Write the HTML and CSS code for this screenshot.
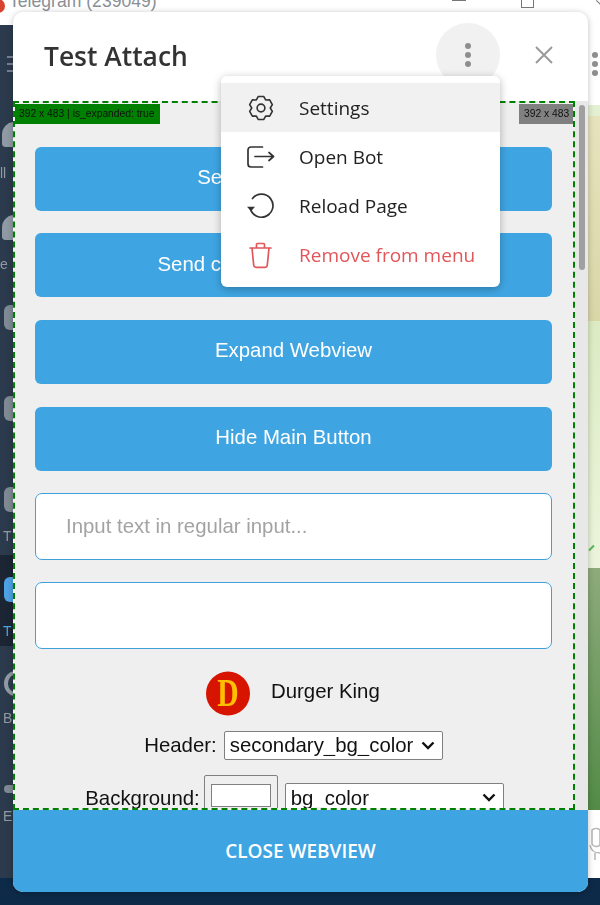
FILE: index.html
```html
<!DOCTYPE html>
<html lang="en">
<head>
<meta charset="utf-8">
<title>Test Attach</title>
<link rel="stylesheet" href="styles.css">
</head>
<body>
<div class="desktop">
  <div class="titlebar">
    <span class="app-dot"></span>
    <span class="app-title">Telegram (239049)</span>
    <span class="win-min"></span>
    <span class="win-max"></span>
    <span class="win-close"></span>
  </div>
  <div class="app">
    <div class="sidebar">
      <div class="burger"><i></i><i></i><i></i></div>
      <div class="tab tab-a"><span class="bubble"></span><span class="tab-label">ll</span></div>
      <div class="tab tab-b"><span class="bubble"></span><span class="tab-label">e</span></div>
      <div class="tab tab-c"><span class="tile"></span></div>
      <div class="tab tab-d"><span class="tile"></span></div>
      <div class="tab tab-e"><span class="tile"></span><span class="tab-label">T</span></div>
      <div class="tab tab-active"><span class="tile blue"></span><span class="tab-label blue-text">T</span></div>
      <div class="tab tab-f"><span class="tile ring"></span><span class="tab-label">B</span></div>
      <div class="tab tab-g"><span class="tile"></span><span class="tab-label">E</span></div>
    </div>
    <div class="chat">
      <div class="chat-head"><i></i><i></i><i></i></div>
      <div class="wall">
        <div class="wall-a"></div>
        <div class="wall-b"></div>
        <div class="wall-c"><span class="tick"></span></div>
        <div class="wall-d"></div>
      </div>
      <div class="chat-foot">
        <svg width="12" height="36" viewBox="0 0 12 36" fill="none" stroke="#b5b5b5" stroke-width="1.500"><path d="M4 3a6 6 0 0 1 8 0v15a5 5 0 0 1-8-1zM2 18c1 6 5 8 10 8M7 26v7"/></svg>
      </div>
    </div>
  </div>
</div>

<div class="modal">
  <header class="modal-head">
    <h1 class="modal-title">Test Attach</h1>
    <button class="more" type="button" aria-label="More"><i></i><i></i><i></i></button>
    <button class="close" type="button" aria-label="Close">
      <svg width="20" height="20" viewBox="0 0 20 20"><path d="M2 2 18 18M18 2 2 18" stroke="#9a9a9a" stroke-width="2" fill="none"/></svg>
    </button>
  </header>

  <div class="viewport">
    <div class="webview">
      <div class="stats">
        <span class="stat-full">392 x 483 | is_expanded: true</span>
        <span class="stat-short">392 x 483</span>
      </div>
      <div class="content">
        <button class="btn" type="button">Send message to bot</button>
        <button class="btn" type="button">Send current messages to bot</button>
        <button class="btn" type="button">Expand Webview</button>
        <button class="btn" type="button">Hide Main Button</button>
        <input class="field" type="text" placeholder="Input text in regular input...">
        <input class="field field-b" type="text">
        <div class="user">
          <svg class="avatar" width="44" height="45" viewBox="0 0 44 45"><circle cx="22" cy="22.500" r="22" fill="#d71400"/></svg>
          <span class="avatar-letter">D</span>
          <span class="user-name">Durger King</span>
        </div>
        <div class="row row-header">
          <label class="row-label">Header:</label>
          <select class="sel sel-header"><option>secondary_bg_color</option></select>
        </div>
        <div class="row row-bg">
          <label class="row-label">Background:</label>
          <span class="color"><span class="swatch"></span></span>
          <select class="sel sel-bg"><option>bg_color</option></select>
        </div>
      </div>
    </div>
    <div class="scrollbar"><div class="thumb"></div></div>
  </div>

  <button class="main-btn" type="button">CLOSE WEBVIEW</button>

  <nav class="menu">
    <div class="menu-item active">
      <svg class="mi" width="28" height="28" viewBox="-1 -1 26 26" fill="none" stroke="#333" stroke-width="1.500" stroke-linejoin="round"><path d="M14.470 1.280 16.300 4.550 20.040 4.500 22.520 8.790 20.600 12 22.520 15.210 20.040 19.500 16.300 19.450 14.470 22.720H9.530L7.700 19.450 3.960 19.500 1.480 15.210 3.400 12 1.480 8.790 3.960 4.500 7.700 4.550 9.530 1.280z"/><circle cx="12" cy="12" r="3.600"/></svg>
      <span>Settings</span>
    </div>
    <div class="menu-item">
      <svg class="mi" width="28" height="28" viewBox="0 0 28 28" fill="none" stroke="#333" stroke-width="1.700" stroke-linecap="round" stroke-linejoin="round"><path d="M15.500 4H4a3 3 0 0 0-3 3v14a3 3 0 0 0 3 3h11.500"/><path d="M8 13.500h18M22 9.500l4.500 4-4.500 4"/></svg>
      <span>Open Bot</span>
    </div>
    <div class="menu-item">
      <svg class="mi" width="28" height="28" viewBox="0 0 28 28" fill="none" stroke="#333" stroke-width="1.700" stroke-linecap="round"><path d="M5.500 6.500A11.500 11.500 0 1 1 3.200 16"/><path d="M0 14.800h8l-4 4.400z" fill="#333" stroke="none"/></svg>
      <span>Reload Page</span>
    </div>
    <div class="menu-item danger">
      <svg class="mi" width="28" height="28" viewBox="0 0 28 28" fill="none" stroke="#e2565a" stroke-width="1.700" stroke-linecap="round" stroke-linejoin="round"><path d="M3 7h21M9.500 7V3.500a1 1 0 0 1 1-1h6a1 1 0 0 1 1 1V7M5 7l1.700 17a2.500 2.500 0 0 0 2.500 2.300h8.600a2.500 2.500 0 0 0 2.500-2.300L22 7"/></svg>
      <span>Remove from menu</span>
    </div>
  </nav>
</div>
</body>
</html>
```
FILE: styles.css
```css
* { box-sizing: border-box; }
html, body { margin: 0; padding: 0; }
body {
  width: 600px;
  height: 905px;
  overflow: hidden;
  position: relative;
  background: #0d2a48;
  font-family: "Liberation Sans", Arial, sans-serif;
}

/* Desktop behind the popup */
.desktop { width: 600px; height: 878px; display: flex; flex-direction: column; filter: blur(.35px); }
.titlebar {
  height: 25px;
  background: #fff;
  display: flex;
  align-items: center;
  position: relative;
  overflow: hidden;
  flex: none;
}
.app-dot { width: 14px; height: 14px; border-radius: 50%; background: #d8432f; margin-left: -9px; margin-top: -14px; }
.app-title { margin-left: 4px; margin-top: -22px; font: 17.600px "Liberation Sans", sans-serif; color: #8a8f96; }
.win-min { position: absolute; left: 452px; top: 0; width: 14px; height: 1px; background: #777; }
.win-max { position: absolute; left: 521px; top: -5px; width: 13px; height: 13px; border: 1px solid #777; }
.win-close { position: absolute; left: 595px; top: 3px; width: 9px; height: 1px; background: #777; transform: rotate(45deg); }
.app { flex: 1; display: flex; justify-content: space-between; min-height: 0; }
.sidebar { width: 13px; background: #2b3a4c; position: relative; overflow: hidden; }
.burger { position: absolute; left: 7px; top: 31px; display: flex; flex-direction: column; gap: 5px; }
.burger i { display: block; width: 12px; height: 2px; background: #77828e; }
.tab { position: absolute; left: 0; width: 13px; overflow: hidden; }
.tab-a { top: 97px; height: 60px; }
.tab-b { top: 190px; height: 58px; }
.tab-c { top: 278px; height: 30px; }
.tab-d { top: 369px; height: 30px; }
.tab-e { top: 460px; height: 60px; }
.tab-active { top: 530px; height: 91px; background: #1b2533; }
.tab-f { top: 622px; height: 80px; }
.tab-g { top: 740px; height: 60px; }
.bubble { position: absolute; left: 2px; top: 0; width: 24px; height: 25px; border-radius: 50% 50% 50% 15%; background: #8f9aa4; }
.tile { position: absolute; left: 4px; top: 2px; width: 22px; height: 25px; border-radius: 6px; background: #7f8a95; }
.tab-active .tile { top: 22px; }
.tile.blue { background: #4ea1e4; }
.tile.ring { top: 24px; background: transparent; border: 4px solid #8f9aa4; border-radius: 50%; }
.tab-g .tile { top: 20px; height: 8px; }
.tab-label { position: absolute; left: 3px; bottom: 0; font-size: 14px; line-height: 18px; color: #8f9aa4; }
.tab-a .tab-label { left: 0; }
.tab-b .tab-label { left: 0; }
.blue-text { color: #4ea1e4; bottom: 6px; }
.chat { width: 12px; display: flex; flex-direction: column; }
.chat-head { height: 80px; background: #fff; display: flex; flex-direction: column; align-items: center; padding-top: 27px; gap: 3px; }
.chat-head i { display: block; width: 6px; height: 6px; margin-left: 2px; border-radius: 50%; background: #8e8e8e; }
.wall { flex: 1; display: flex; flex-direction: column; }
.wall-a { height: 11px; background: #e3f0d2; }
.wall-b { height: 205px; background: linear-gradient(#e7e3bd, #d9d7a8); }
.wall-c { height: 247px; background: linear-gradient(#dcebc3, #ecf5dc); position: relative; }
.tick { position: absolute; left: 0; top: 226px; width: 7px; height: 2px; background: #5cb85c; transform: rotate(-45deg); }
.wall-d { height: 242px; background: linear-gradient(#8eab7c, #538b47); }
.chat-foot { height: 68px; background: #fff; padding-top: 17px; }
.chat-foot svg { display: block; }

/* Popup */
.modal {
  position: absolute;
  left: 13px;
  top: 12px;
  width: 575px;
  height: 880px;
  display: flex;
  flex-direction: column;
  border-radius: 10px;
  background: #fff;
  box-shadow: 0 1px 6px rgba(0, 0, 0, .25);
  filter: blur(.35px);
}
.modal-head { height: 89px; display: flex; align-items: center; padding: 0 34px 4px 31px; flex: none; }
.modal-title {
  margin: 0;
  flex: 1;
  font: 600 26.400px "Open Sans", sans-serif;
  color: #333;
  position: relative;
  top: 1px;
}
.more {
  width: 64px;
  height: 64px;
  margin-right: 34px;
  border: 0;
  border-radius: 50%;
  background: #f1f1f1;
  display: flex;
  flex-direction: column;
  align-items: center;
  justify-content: center;
  gap: 3px;
  padding: 0;
}
.more i { display: block; width: 6px; height: 6px; border-radius: 50%; background: #8e8e8e; }
.close { width: 20px; height: 20px; padding: 0; border: 0; background: none; display: flex; }

.viewport { flex: 1; display: flex; min-height: 0; background: #efefef; }
.webview {
  flex: 1;
  min-width: 0;
  border: 2px dashed #008000;
  position: relative;
  overflow: hidden;
}
.stats { position: absolute; left: -2px; right: -2px; top: 1px; display: flex; justify-content: space-between; font-size: 10.300px; line-height: 20px; color: #111; }
.stat-full { background: #008000; width: 147px; padding-left: 6px; height: 20px; white-space: nowrap; }
.stat-short { background: #808080; width: 56px; padding-left: 5px; height: 20px; white-space: nowrap; }
.content { padding: 43.800px 21px 0 20px; display: flex; flex-direction: column; }
.btn {
  width: 517px;
  height: 64px;
  flex: none;
  margin-bottom: 22.600px;
  border: 0;
  border-radius: 6px;
  background: #3fa5e2;
  color: #fff;
  font: 20.400px "Liberation Sans", sans-serif;
  padding: 0 0 2px;
}
.field {
  width: 517px;
  height: 67px;
  flex: none;
  margin-bottom: 22px;
  border: 1.500px solid #3fa0da;
  border-radius: 7px;
  background: #fff;
  padding: 0 30px;
  font: 20.400px "Liberation Sans", sans-serif;
  outline: none;
}
.field::placeholder { color: #a3a3a3; opacity: 1; }
.field-b { margin-bottom: 0; }
.user { height: 59px; margin-top: 22px; position: relative; }
.avatar { position: absolute; left: 171px; top: 0; }
.avatar-letter {
  position: absolute;
  left: 179px;
  top: -1px;
  width: 28px;
  text-align: center;
  font: bold 39px/46px "Liberation Serif", serif;
  color: #ffbe00;
  transform: scaleX(.76);
}
.user-name { position: absolute; left: 236px; top: 8px; font-size: 20.400px; line-height: 24px; color: #111; }
.row { display: flex; align-items: center; justify-content: center; }
.row-label { font-size: 20.400px; color: #111; }
.row-header { height: 30px; gap: 7px; }
.row-bg { margin-top: 15px; height: 44px; gap: 7px; align-items: flex-start; padding-left: 2px; }
.row-bg .row-label { margin-top: 12px; margin-right: -3px; }
.sel {
  appearance: none;
  height: 29px;
  font: 20.400px "Liberation Sans", sans-serif;
  color: #111;
  background: #fff url("data:image/svg+xml,%3Csvg xmlns='http://www.w3.org/2000/svg' width='14' height='9'%3E%3Cpath d='M1.500 1.500 7 7l5.500-5.500' fill='none' stroke='%23111' stroke-width='2.400'/%3E%3C/svg%3E") no-repeat right 7px center;
  border: 1px solid #808080;
  border-radius: 2px;
  padding: 0 0 0 5px;
}
.sel-header { width: 219px; }
.sel-bg { width: 219px; margin-top: 8px; }
.color {
  width: 74px;
  height: 44px;
  border: 1px solid #808080;
  border-radius: 2px;
  padding: 8px 6px 0;
  background: #efefef;
  display: block;
}
.swatch { display: block; width: 60px; height: 23px; background: #fff; border: 1px solid #808080; }
.scrollbar { width: 13px; flex: none; background: #e8e8e8; padding: 4px 3px; }
.thumb { width: 6px; height: 165px; margin-left: 1px; border-radius: 3px; background: #a0a0a0; }

.main-btn {
  height: 82px;
  flex: none;
  border: 0;
  border-radius: 0 0 10px 10px;
  background: #3fa5e2;
  color: #fff;
  font: 600 19px "Open Sans", sans-serif;
  padding: 0;
}

.menu {
  position: absolute;
  left: 208px;
  top: 64px;
  width: 279px;
  height: 211px;
  padding-top: 7px;
  border-radius: 6px;
  background: #fff;
  box-shadow: 0 2px 8px rgba(0, 0, 0, .28);
}
.menu-item { height: 49px; display: flex; align-items: center; padding-left: 26px; gap: 24px; font: 19px "Open Sans", sans-serif; color: #222; }
.menu-item.active { background: #f1f1f1; }
.menu-item.danger { color: #e2565a; }
.mi { flex: none; }
```
